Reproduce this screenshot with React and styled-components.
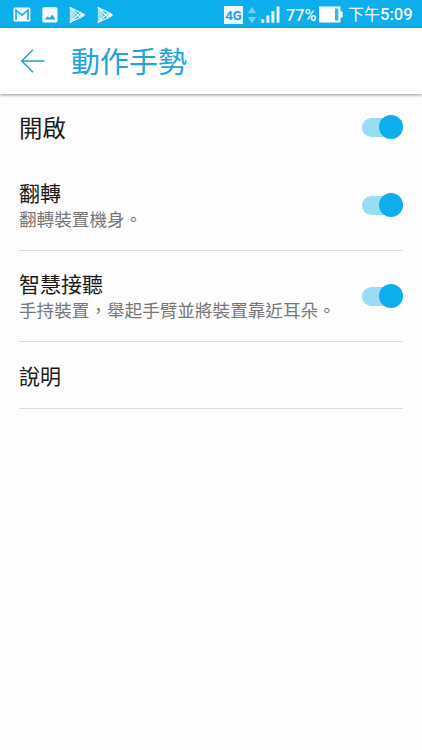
import React, { useState } from 'react';
import { createGlobalStyle, styled } from 'styled-components';

const settings = [
    { id: 'flip', name: '翻轉', detail: '翻轉裝置機身。' },
    { id: 'answer', name: '智慧接聽', detail: '手持裝置，舉起手臂並將裝置靠近耳朵。' },
]

function MailIcon() {
    return (
        <svg width="18" height="15" viewBox="0 0 18 15">
            <rect x="0.5" y="0.5" width="17" height="14" rx="1.5" fill="#eefaff" />
            <path d="M3 13V3.2L9 8.2l6-5V13" fill="none" stroke="#22a9dd" strokeWidth="1.6" />
        </svg>
    )
}

function PictureIcon() {
    return (
        <svg width="16" height="16" viewBox="0 0 16 16">
            <rect x="0.3" y="0.3" width="15.2" height="15.2" rx="1.6" fill="#f2fbff" />
            <path d="M2.8 12.6l2.7-3.4 2 1.8 2.9-3.6 3 5.2z" fill="#22a9dd" />
        </svg>
    )
}

function PlayIcon() {
    return (
        <svg width="17" height="16" viewBox="0 0 17 16">
            <path d="M0.8 0.5v15L6.6 8z" fill="#a9e2f8" />
            <path d="M0.8 0.5L12 11M0.8 15.5L12 5" stroke="#f2fcff" strokeWidth="1.4" />
            <path d="M0.8 0.5L12.4 6M0.8 15.5L12.4 10" stroke="#f2fcff" strokeWidth="1.3" />
            <path d="M10.6 8l2.5-2.5L16.2 8l-3.1 2.5z" fill="#f2fcff" />
        </svg>
    )
}

function DataIcon() {
    return (
        <svg width="10" height="18" viewBox="0 0 10 18">
            <path d="M0.8 7.3L5 0.8l4.2 6.5zM0.8 11h8.4L5 17.5z" fill="#76cdef" />
        </svg>
    )
}

function SignalIcon() {
    return (
        <svg width="19" height="17" viewBox="0 0 19 17">
            <path d="M0.3 13.3h3v3.4h-3zM5.4 9.5h3v7.2h-3zM10.4 5h3v11.7h-3zM15.5 0.5h3v16.2h-3z" fill="#eafaff" />
        </svg>
    )
}

function BatteryIcon() {
    return (
        <svg width="24" height="17" viewBox="0 0 24 17">
            <path d="M0 0.5h21.5v5H23.6v6h-2.1v5H0z" fill="#fff" />
            <path d="M16 2.5h3.3v12H16z" fill="#30b8ec" />
        </svg>
    )
}

function BackIcon() {
    return (
        <svg width="24" height="24" viewBox="0 0 24 24">
            <path d="M23.5 12H1M12 0.8L0.8 12 12 23.2" fill="none" stroke="#20a3d6" strokeWidth="1.5" />
        </svg>
    )
}

function Toggle({ label, on, onClick }) {
    return (
        <Switch type="button" role="switch" aria-checked={on} aria-label={label} $on={on} onClick={onClick}>
            <Thumb $on={on} />
        </Switch>
    )
}

function App() {
    const [enabled, setEnabled] = useState({ all: true, flip: true, answer: true })

    const toggle = (id) => setEnabled({ ...enabled, [id]: !enabled[id] })

    return (
        <Screen>
            <GlobalStyle />
            <StatusBar>
                <Notifications>
                    <MailIcon />
                    <PictureIcon />
                    <PlayIcon />
                    <PlayIcon />
                </Notifications>
                <System>
                    <Network>4G</Network>
                    <DataIcon />
                    <SignalIcon />
                    <Percent>77%</Percent>
                    <BatteryIcon />
                    <Clock>下午<b>5:09</b></Clock>
                </System>
            </StatusBar>
            <Header>
                <BackButton type="button" aria-label="返回"><BackIcon /></BackButton>
                <Title>動作手勢</Title>
            </Header>
            <main>
                <MasterRow>
                    <MasterName>開啟</MasterName>
                    <Toggle label="開啟" on={enabled.all} onClick={() => toggle('all')} />
                </MasterRow>
                <List>
                    {settings.map(item => (
                        <Row key={item.id} $height={91}>
                            <Texts>
                                <Name>{item.name}</Name>
                                <Detail>{item.detail}</Detail>
                            </Texts>
                            <Toggle label={item.name} on={enabled[item.id]} onClick={() => toggle(item.id)} />
                        </Row>
                    ))}
                    <Row $height={67}>
                        <Texts>
                            <Name>說明</Name>
                        </Texts>
                    </Row>
                </List>
            </main>
        </Screen>
    )
}

export default App;

const GlobalStyle = createGlobalStyle`
    * {
        box-sizing: border-box;
    }

    body {
        margin: 0;
        background: #fdfdfd;
        font-family: Roboto, "Noto Sans CJK TC", sans-serif;
    }

    svg {
        display: block;
        flex: none;
    }
`;

const Screen = styled.div`
    width: 100%;
    min-height: 750px;
    background: #fdfdfd;
`;

const StatusBar = styled.div`
    display: flex;
    justify-content: space-between;
    align-items: center;
    height: 28px;
    padding: 1px 9px 0 13px;
    background: #0caeeb;
    color: #f4fcff;
`;

const Notifications = styled.div`
    display: flex;
    align-items: center;
    gap: 11px;
`;

const System = styled.div`
    display: flex;
    align-items: center;
`;

const Network = styled.span`
    width: 19px;
    height: 18px;
    margin-right: 4px;
    background: #f0fbff;
    color: #12a5de;
    font-size: 13.2px;
    font-weight: 700;
    line-height: 19px;
    text-align: center;

    & + svg {
        margin-right: 4px;
    }
`;

const Percent = styled.span`
    width: 33px;
    margin-left: 6px;
    padding-top: 2px;
    font-size: 16.2px;
    font-weight: 500;
    line-height: 20px;
    white-space: nowrap;
`;

const Clock = styled.span`
    width: 65px;
    margin-left: 5px;
    padding-top: 1px;
    font-size: 16px;
    line-height: 20px;
    white-space: nowrap;

    b {
        font-size: 16.6px;
        font-weight: 500;
    }
`;

const Header = styled.header`
    display: flex;
    align-items: center;
    height: 66px;
    padding-left: 21px;
    background: #fff;
    box-shadow: 0 1px 3px rgba(0, 0, 0, 0.42);
`;

const BackButton = styled.button`
    padding: 0;
    border: 0;
    background: none;
    cursor: pointer;
`;

const Title = styled.h1`
    margin: 0 0 0 26px;
    padding-top: 3px;
    color: #20a3d6;
    font-size: 29px;
    font-weight: 400;
    line-height: 40px;
`;

const MasterRow = styled.div`
    display: flex;
    justify-content: space-between;
    align-items: center;
    height: 66px;
    padding: 0 19px;
`;

const MasterName = styled.span`
    padding-top: 3px;
    color: #1a1a1a;
    font-size: 23.4px;
    line-height: 32px;
`;

const List = styled.div`
    padding: 0 19px;
`;

const Row = styled.div`
    display: flex;
    justify-content: space-between;
    align-items: center;
    height: ${props => props.$height}px;
    border-bottom: 1px solid #dcdcdc;
`;

const Texts = styled.div`
    padding-top: 4px;
`;

const Name = styled.div`
    color: #1a1a1a;
    font-size: 21px;
    line-height: 26px;
`;

const Detail = styled.div`
    color: #777;
    font-size: 17.6px;
    line-height: 26px;
    white-space: nowrap;
`;

const Switch = styled.button`
    display: flex;
    align-items: center;
    justify-content: ${props => props.$on ? "flex-end" : "flex-start"};
    flex: none;
    width: 41px;
    height: 19px;
    padding: 0;
    border: 0;
    border-radius: 10px;
    background: ${props => props.$on ? "#99dcf5" : "#ccc"};
    cursor: pointer;
`;

const Thumb = styled.span`
    flex: none;
    width: 24px;
    height: 24px;
    border-radius: 50%;
    background: ${props => props.$on ? "#0eaeed" : "#f1f1f1"};
`;
